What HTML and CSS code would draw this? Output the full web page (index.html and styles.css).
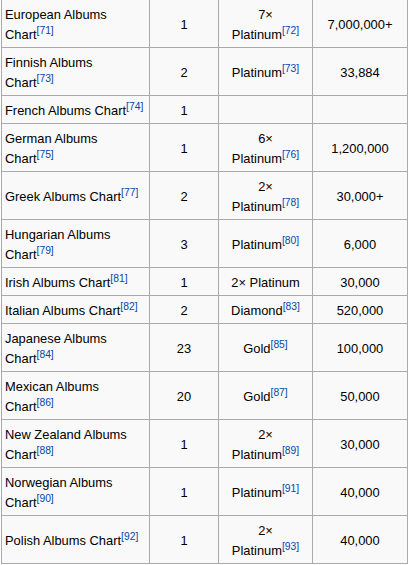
FILE: index.html
```html
<!DOCTYPE html>
<html>
<head>
<meta charset="utf-8">
<link rel="stylesheet" href="styles.css">
</head>
<body>
<table class="charts">
<colgroup><col class="c1"><col class="c2"><col class="c3"><col class="c4"></colgroup>
<tr class="dbl"><td class="name">European Albums<br>Chart<sup>[71]</sup></td><td>1</td><td>7×<br>Platinum<sup>[72]</sup></td><td>7,000,000+</td></tr>
<tr class="dbl"><td class="name">Finnish Albums<br>Chart<sup>[73]</sup></td><td>2</td><td>Platinum<sup>[73]</sup></td><td>33,884</td></tr>
<tr class="sgl"><td class="name">French Albums Chart<sup>[74]</sup></td><td>1</td><td></td><td></td></tr>
<tr class="dbl"><td class="name">German Albums<br>Chart<sup>[75]</sup></td><td>1</td><td>6×<br>Platinum<sup>[76]</sup></td><td>1,200,000</td></tr>
<tr class="dbl"><td class="name">Greek Albums Chart<sup>[77]</sup></td><td>2</td><td>2×<br>Platinum<sup>[78]</sup></td><td>30,000+</td></tr>
<tr class="dbl"><td class="name">Hungarian Albums<br>Chart<sup>[79]</sup></td><td>3</td><td>Platinum<sup>[80]</sup></td><td>6,000</td></tr>
<tr class="sgl"><td class="name">Irish Albums Chart<sup>[81]</sup></td><td>1</td><td>2× Platinum</td><td>30,000</td></tr>
<tr class="sgl"><td class="name">Italian Albums Chart<sup>[82]</sup></td><td>2</td><td>Diamond<sup>[83]</sup></td><td>520,000</td></tr>
<tr class="dbl"><td class="name">Japanese Albums<br>Chart<sup>[84]</sup></td><td>23</td><td>Gold<sup>[85]</sup></td><td>100,000</td></tr>
<tr class="dbl"><td class="name">Mexican Albums<br>Chart<sup>[86]</sup></td><td>20</td><td>Gold<sup>[87]</sup></td><td>50,000</td></tr>
<tr class="dbl"><td class="name">New Zealand Albums<br>Chart<sup>[88]</sup></td><td>1</td><td>2×<br>Platinum<sup>[89]</sup></td><td>30,000</td></tr>
<tr class="dbl"><td class="name">Norwegian Albums<br>Chart<sup>[90]</sup></td><td>1</td><td>Platinum<sup>[91]</sup></td><td>40,000</td></tr>
<tr class="dbl"><td class="name">Polish Albums Chart<sup>[92]</sup></td><td>1</td><td>2×<br>Platinum<sup>[93]</sup></td><td>40,000</td></tr>
</table>
</body>
</html>
```
FILE: styles.css
```css
html, body {
  margin: 0;
  padding: 0;
  background: #fff;
}
body {
  font-family: "Liberation Sans", Arial, sans-serif;
  font-size: 12.9px;
  color: #000;
}
.charts {
  border-collapse: collapse;
  table-layout: fixed;
  width: 407px;
  margin: -1px 0 0 1px;
  background: #f9f9f9;
  border: 1px solid #aaa;
}
.c1 { width: 148px; }
.c2 { width: 69px; }
.c3 { width: 94px; }
.c4 { width: 95px; }
.charts td {
  border: 1px solid #aaa;
  padding: 5px 3px 2px;
  line-height: 20px;
  text-align: center;
  vertical-align: middle;
}
.charts td.name {
  text-align: left;
}
.dbl td { height: 40px; }
.sgl td { height: 20px; }
.x {
  font-size: 80%;
}
sup {
  font-size: 80%;
  line-height: 0;
  vertical-align: super;
  color: #0645ad;
}
```
